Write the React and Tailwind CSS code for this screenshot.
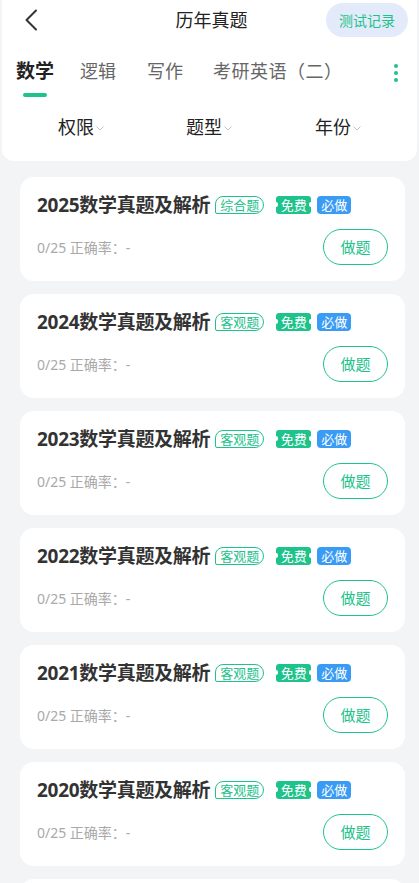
import React from 'react';

const items = [
  { year: '2025', kind: '综合题' },
  { year: '2024', kind: '客观题' },
  { year: '2023', kind: '客观题' },
  { year: '2022', kind: '客观题' },
  { year: '2021', kind: '客观题' },
  { year: '2020', kind: '客观题' },
];

function Chevron() {
  return (
    <svg width="10" height="10" viewBox="0 0 10 10" className="ml-[1px] mt-[1px]">
      <path d="M1.5 3.5 L5 7 L8.5 3.5" fill="none" stroke="#c4c4c4" strokeWidth="1" />
    </svg>
  );
}

function Card({ year, kind }) {
  return (
    <div className="bg-white rounded-[14px] h-[104px] px-[17px] pt-[14px] shrink-0">
      <div className="flex items-center h-[28px]">
        <span className="text-[19px] font-bold text-[#333] tracking-[-0.3px]">{year}数学真题及解析</span>
        <span className="ml-[5px] h-[18px] px-[4px] flex items-center border border-[#1ec28b] text-[#1ec28b] text-[13px] rounded-[8px_9px_9px_2px] leading-none">
          {kind}
        </span>
        <span className="relative ml-[12px] h-[18px] w-[35px] flex items-center justify-center bg-[#1ec28b] text-white text-[13px] rounded-[3px] leading-none">
          免费
          <span className="absolute left-[-2px] top-[6px] w-[4px] h-[5px] rounded-full bg-white" />
          <span className="absolute right-[-2px] top-[6px] w-[4px] h-[5px] rounded-full bg-white" />
        </span>
        <span className="ml-[6px] h-[18px] w-[34px] flex items-center justify-center bg-[#3a9bf5] text-white text-[13px] rounded-[4px] leading-none">
          必做
        </span>
      </div>
      <div className="flex items-center justify-between mt-[10px]">
        <span className="text-[14px] text-[#a9a9a9]">0/25 正确率：-</span>
        <button className="w-[65px] h-[36px] rounded-full border border-[#1ec28b] text-[#1ec28b] text-[15px]">
          做题
        </button>
      </div>
    </div>
  );
}

export default function App() {
  return (
    <div
      className="w-[419px] h-[883px] overflow-hidden bg-[#f3f4f5] flex flex-col"
      style={{ fontFamily: '"Noto Sans", "Noto Sans CJK SC", sans-serif' }}
    >
      {/* Header panel */}
      <div className="bg-white mx-[2px] rounded-b-[12px] shrink-0 h-[161px] flex flex-col">
        <div className="relative h-[40px] flex items-center justify-center">
          <svg width="14" height="22" viewBox="0 0 14 22" className="absolute left-[22px] top-[9px]">
            <path d="M12 1.5 L2.5 11 L12 20.5" fill="none" stroke="#333" strokeWidth="2" strokeLinecap="round" strokeLinejoin="round" />
          </svg>
          <span className="text-[18px] text-[#222] ml-[4px]">历年真题</span>
          <button className="absolute right-[9px] top-[3px] w-[82px] h-[34px] rounded-full bg-[#e3ebfb] text-[#1ec28b] text-[14px]">
            测试记录
          </button>
        </div>
        <div className="relative flex items-center h-[62px] pl-[14px]">
          <div className="relative flex flex-col items-center">
            <span className="text-[19px] font-bold text-[#222]">数学</span>
            <span className="absolute top-[36px] w-[24px] h-[4px] rounded-full bg-[#1ec28b]" />
          </div>
          <span className="ml-[26px] text-[18px] text-[#666]">逻辑</span>
          <span className="ml-[31px] text-[18px] text-[#666]">写作</span>
          <span className="ml-[30px] text-[18px] text-[#666] tracking-[0.5px]">考研英语（二）</span>
          <div className="absolute right-[19px] top-[24px] flex flex-col gap-[3px]">
            <span className="w-[4px] h-[4px] rounded-full bg-[#1ec28b]" />
            <span className="w-[4px] h-[4px] rounded-full bg-[#1ec28b]" />
            <span className="w-[4px] h-[4px] rounded-full bg-[#1ec28b]" />
          </div>
        </div>
        <div className="flex items-center h-[50px]">
          <div className="flex items-center ml-[56px]">
            <span className="text-[18px] text-[#222]">权限</span>
            <Chevron />
          </div>
          <div className="flex items-center ml-[81px]">
            <span className="text-[18px] text-[#222]">题型</span>
            <Chevron />
          </div>
          <div className="flex items-center ml-[82px]">
            <span className="text-[18px] text-[#222]">年份</span>
            <Chevron />
          </div>
        </div>
      </div>

      {/* Cards */}
      <div className="flex flex-col gap-[13px] pl-[20px] pr-[14px] mt-[16px]">
        {items.map(it => (
          <Card key={it.year} year={it.year} kind={it.kind} />
        ))}
        <div className="bg-white rounded-[14px] h-[104px] shrink-0" />
      </div>
    </div>
  );
}
